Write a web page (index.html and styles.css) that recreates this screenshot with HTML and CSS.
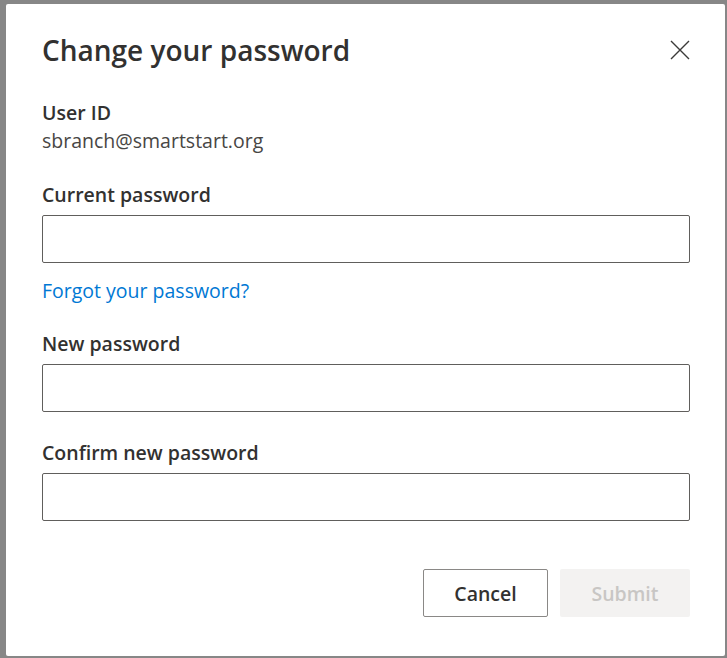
FILE: index.html
```html
<!DOCTYPE html>
<html lang="en">
<head>
  <meta charset="UTF-8" />
  <title>Change your password</title>
  <link rel="stylesheet" href="styles.css">
</head>
<body>

  <div class="dialog">
    <div class="header">
      <h1>Change your password</h1>
      <button class="close" aria-label="Close">
        <svg width="20" height="20" viewBox="0 0 20 20">
          <path d="M1 1 L19 19 M19 1 L1 19" stroke="#3b3a39" stroke-width="1.4" fill="none" />
        </svg>
      </button>
    </div>

    <div class="user">
      <div class="label">User ID</div>
      <div class="value">sbranch@smartstart.org</div>
    </div>

    <form class="form">
      <div class="field">
        <label class="label">Current password</label>
        <input type="password" class="input">
      </div>
      <a href="#" class="link">Forgot your password?</a>
      <div class="field">
        <label class="label">New password</label>
        <input type="password" class="input">
      </div>
      <div class="field">
        <label class="label">Confirm new password</label>
        <input type="password" class="input">
      </div>

      <div class="footer">
        <button type="button" class="btn cancel">Cancel</button>
        <button type="submit" class="btn submit" disabled>Submit</button>
      </div>
    </form>
  </div>

</body>
</html>
```

FILE: styles.css
```css
* { box-sizing: border-box; }
body {
  margin: 0;
  height: 658px;
  padding: 4px 2px 2px 6px;
  background-color: #878787;
  font-family: 'Open Sans', 'Noto Sans', sans-serif;
  color: #323130;
  overflow: hidden;
}
.dialog {
  width: 719px;
  height: 652px;
  background-color: #fff;
  border-radius: 2px;
  padding: 24px 35px 0 36px;
}
.header {
  display: flex;
  justify-content: space-between;
  align-items: center;
}
h1 {
  margin: 0;
  font-size: 28px;
  font-weight: 600;
  line-height: 44px;
}
.close {
  border: none;
  background: none;
  padding: 0;
  width: 20px;
  height: 20px;
  display: flex;
}
.user { margin-top: 27px; }
.label {
  display: block;
  font-size: 19.5px;
  font-weight: 600;
  line-height: 28px;
}
.value {
  font-size: 19.5px;
  line-height: 28px;
  color: #484644;
}
.form { margin-top: 26px; display: flex; flex-direction: column; }
.field { display: flex; flex-direction: column; gap: 6px; }
.input {
  height: 48px;
  border: 1px solid #605e5c;
  border-radius: 2px;
  outline: none;
}
.link {
  color: #0078d4;
  text-decoration: none;
  font-size: 19.5px;
  line-height: 28px;
  margin: 14px 0 25px;
  align-self: flex-start;
}
.field + .field { margin-top: 27px; }
.footer {
  display: flex;
  justify-content: flex-end;
  gap: 12px;
  margin-top: 48px;
}
.btn {
  height: 48px;
  border-radius: 2px;
  font-family: inherit;
  font-size: 19.5px;
  font-weight: 600;
}
.cancel {
  width: 125px;
  background: #fff;
  border: 1px solid #8a8886;
  color: #323130;
}
.submit {
  width: 130px;
  background: #f3f2f1;
  border: none;
  color: #c8c6c4;
}
```
